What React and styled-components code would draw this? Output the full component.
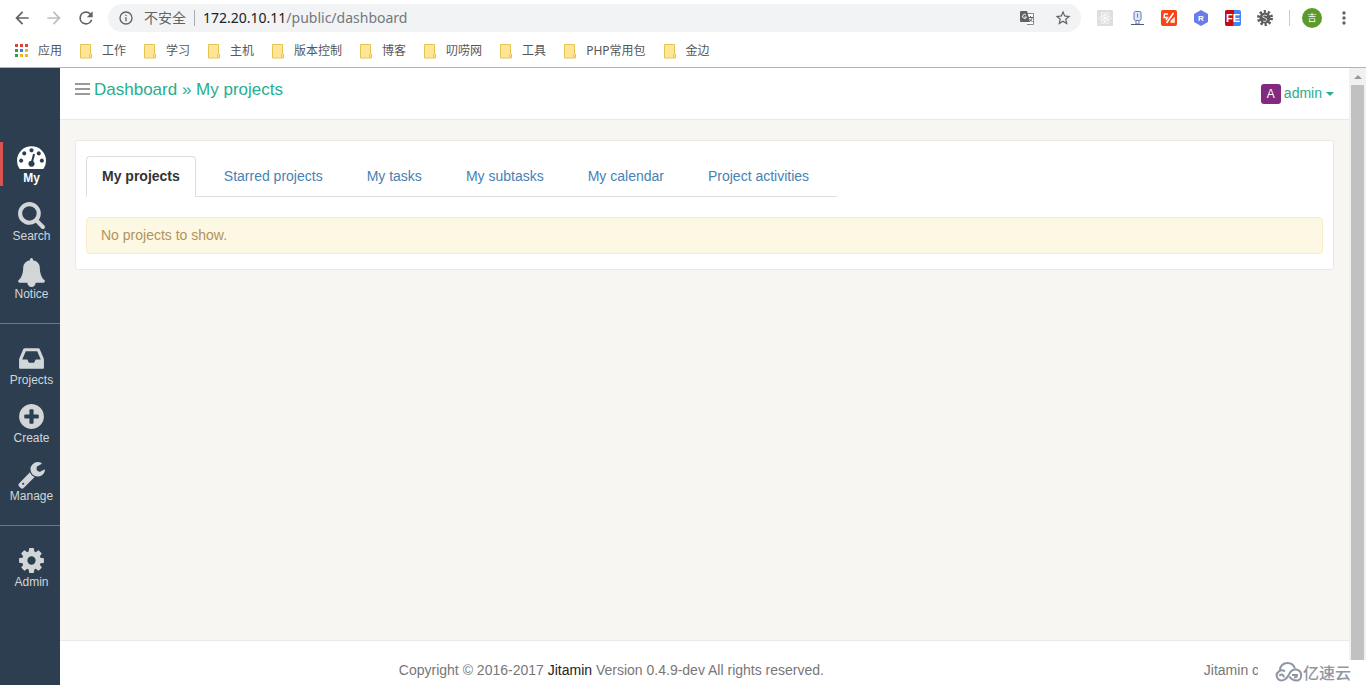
import React from 'react';
import styled, { createGlobalStyle, css } from 'styled-components';

const ui = '"Noto Sans", "Noto Sans CJK SC", sans-serif';
const body = '"Liberation Sans", Arial, sans-serif';

const GlobalStyle = createGlobalStyle`
  * { box-sizing: border-box; }
  html, body, #root { height: 100%; }
  body { margin: 0; background: #fff; font: 14px/20px ${body}; color: #777; overflow: hidden; }
  button, input { font: inherit; color: inherit; }
  a { text-decoration: none; color: inherit; }
  ul { margin: 0; padding: 0; list-style: none; }
`;

const Window = styled.div`
  display: flex;
  flex-direction: column;
  height: 100vh;
`;

/* Browser chrome */
const Chrome = styled.header`
  flex: none;
  background: #fff;
  border-bottom: 1px solid #b1b3b6;
  font-family: ${ui};
`;

const Toolbar = styled.div`
  display: flex;
  align-items: center;
  height: 36px;
  padding: 0 6px;
`;

const IconButton = styled.button`
  display: flex;
  align-items: center;
  justify-content: center;
  flex: none;
  width: 32px;
  height: 28px;
  padding: 0;
  border: 0;
  background: none;
`;

const AddressBar = styled.form`
  display: flex;
  flex: 1;
  align-items: center;
  height: 28px;
  margin: 0 8px 0 6px;
  padding: 0 2px 0 10px;
  border-radius: 14px;
  background: #f1f3f4;
`;

const Security = styled.span`
  display: flex;
  align-items: center;
  gap: 10px;
  padding-right: 8px;
  border-right: 1px solid #a9acb0;
  font-size: 14px;
  line-height: 14px;
  color: #5f6368;
`;

const UrlField = styled.div`
  display: grid;
  flex: 1;
  margin-left: 8px;
  font-size: 14px;
  line-height: 20px;
  color: #74787c;
`;

const UrlInput = styled.input`
  grid-area: 1 / 1;
  width: 100%;
  padding: 0;
  border: 0;
  outline: 0;
  background: none;
  color: transparent;
`;

const UrlText = styled.span`
  grid-area: 1 / 1;
  pointer-events: none;
  b { font-weight: 400; color: #202124; }
`;

const BarActions = styled.div`
  display: flex;
  gap: 4px;
`;

const ToolSeparator = styled.span`
  width: 1px;
  height: 16px;
  margin: 0 6px 0 8px;
  background: #c8cacd;
`;

const Avatar = styled.span`
  display: flex;
  align-items: center;
  justify-content: center;
  width: 20px;
  height: 20px;
  border-radius: 50%;
  background: #5b9a2b;
  color: #fff;
  font-size: 9px;
  line-height: 10px;
`;

const Bookmarks = styled.nav`
  display: flex;
  align-items: center;
  gap: 18px;
  height: 31px;
  padding: 0 14px 1px;
  font-size: 12px;
  line-height: 18px;
  color: #54575b;
`;

const Bookmark = styled.a`
  display: flex;
  align-items: center;
  gap: 9px;
`;

/* Application */
const Workspace = styled.div`
  display: flex;
  flex: 1;
  min-height: 0;
`;

const Sidebar = styled.nav`
  flex: none;
  width: 60px;
  padding-top: 74px;
  background: #2c3e50;
`;

const NavGroup = styled.ul`
  display: flex;
  flex-direction: column;
  gap: 14px;
  & + & {
    margin-top: 21px;
    padding-top: 20px;
    border-top: 1px solid #6b7885;
  }
`;

const NavLink = styled.a`
  display: flex;
  flex-direction: column;
  align-items: center;
  height: 44px;
  border-left: 3px solid transparent;
  font-size: 12px;
  line-height: 14px;
  color: #d3d6d9;
  ${(p) => p.$active && css`
    border-left-color: #d9534f;
    font-weight: 700;
    color: #fff;
  `}
`;

const Main = styled.main`
  display: flex;
  flex: 1;
  flex-direction: column;
  min-width: 0;
  background: #f7f6f2;
`;

const TopBar = styled.header`
  display: flex;
  justify-content: space-between;
  height: 52px;
  padding: 12px 15px 0;
  border-bottom: 1px solid #e9e9e6;
  background: #fff;
`;

const Breadcrumb = styled.h1`
  display: flex;
  align-items: center;
  gap: 4px;
  height: 20px;
  margin: 0;
  font-size: 17px;
  font-weight: 400;
  line-height: 20px;
  color: #26ae8f;
`;

const MenuButton = styled.button`
  display: flex;
  padding: 0;
  border: 0;
  background: none;
`;

const UserMenu = styled.button`
  display: flex;
  align-items: flex-start;
  gap: 3px;
  height: 20px;
  margin-top: 4px;
  padding: 0;
  border: 0;
  background: none;
  line-height: 18px;
  color: #26ae8f;
`;

const Caret = styled.span`
  align-self: center;
  border: 4px solid transparent;
  border-top-color: currentColor;
  border-bottom: 0;
  margin-left: 1px;
`;

const Initial = styled.span`
  width: 20px;
  height: 20px;
  border-radius: 3px;
  background: #822a80;
  color: #fff;
  font-size: 12px;
  line-height: 20px;
  text-align: center;
`;

const Panel = styled.section`
  margin: 20px 15px 0;
  padding: 15px 10px;
  border: 1px solid #eae9e6;
  border-radius: 3px;
  background: #fff;
`;

const Tabs = styled.ul`
  display: flex;
  width: fit-content;
  border-bottom: 1px solid #ddd;
`;

const Tab = styled.a`
  display: block;
  height: 40px;
  margin-right: 12px;
  padding: 10px 16px;
  border-radius: 4px 4px 0 0;
  color: #4682b4;
  ${(p) => p.$active && css`
    height: 41px;
    margin-bottom: -1px;
    padding: 9px 15px;
    border: 1px solid #ddd;
    border-bottom-color: #fff;
    background: #fff;
    font-weight: 700;
    color: #333;
  `}
`;

const Alert = styled.p`
  margin: 20px 0 0;
  padding: 7px 14px 8px;
  border: 1px solid #faebcc;
  border-radius: 4px;
  background: #fcf8e3;
  color: #b3925a;
`;

const Footer = styled.footer`
  display: grid;
  grid-template-columns: minmax(0, 16fr) minmax(0, 3fr);
  height: 45px;
  margin-top: auto;
  padding: 19px 0 0 15px;
  border-top: 1px solid #e9e9e6;
  background: #fff;
`;

const Copyright = styled.span`
  text-align: center;
  a { color: #222; }
`;

const FooterNote = styled.span`
  padding-left: 56px;
  white-space: nowrap;
`;

const Scrollbar = styled.div`
  display: flex;
  flex: none;
  flex-direction: column;
  align-items: center;
  width: 17px;
  padding: 0 2px 25px 2px;
  background: #f1f1f1;
`;

const ScrollArrow = styled.span`
  display: flex;
  align-items: center;
  height: 17px;
`;

const ScrollThumb = styled.span`
  flex: 1;
  width: 100%;
  background: #c1c1c1;
`;

const Watermark = styled.div`
  position: fixed;
  right: 0;
  bottom: 0;
  display: flex;
  align-items: center;
  width: 108px;
  height: 25px;
  padding: 0 0 2px 17px;
  background: #fff;
  color: #8f95a1;
  font: 500 16px/22px "Noto Sans CJK SC", sans-serif;
`;

const glyphs = {
  dashboard: 'M384 1152q0-53-37.5-90.5t-90.5-37.5-90.5 37.5-37.5 90.5 37.5 90.5 90.5 37.5 90.5-37.5 37.5-90.5zm192-448q0-53-37.5-90.5t-90.5-37.5-90.5 37.5-37.5 90.5 37.5 90.5 90.5 37.5 90.5-37.5 37.5-90.5zm428 481l101-382q6-26-7.5-48.5t-38.5-29.5-48 6.5-30 39.5l-101 382q-60 5-107 43.5t-63 98.5q-20 77 20 146t117 89 146-20 89-117q16-60-6-117t-72-91zm660-33q0-53-37.5-90.5t-90.5-37.5-90.5 37.5-37.5 90.5 37.5 90.5 90.5 37.5 90.5-37.5 37.5-90.5zm-640-640q0-53-37.5-90.5t-90.5-37.5-90.5 37.5-37.5 90.5 37.5 90.5 90.5 37.5 90.5-37.5 37.5-90.5zm448 192q0-53-37.5-90.5t-90.5-37.5-90.5 37.5-37.5 90.5 37.5 90.5 90.5 37.5 90.5-37.5 37.5-90.5zm320 448q0 261-141 483-19 29-54 29h-1402q-35 0-54-29-141-221-141-483 0-182 71-348t191-286 286-191 348-71 348 71 286 191 191 286 71 348z',
  search: 'M1216 832q0-185-131.5-316.5t-316.5-131.5-316.5 131.5-131.5 316.5 131.5 316.5 316.5 131.5 316.5-131.5 131.5-316.5zm512 832q0 52-38 90t-90 38q-54 0-90-38l-343-342q-179 124-399 124-143 0-273.5-55.5t-225-150-150-225-55.5-273.5 55.5-273.5 150-225 225-150 273.5-55.5 273.5 55.5 225 150 150 225 55.5 273.5q0 220-124 399l343 343q37 37 37 90z',
  bell: 'M1728 1408q0 52-38 90t-90 38h-448q0 106-75 181t-181 75-181-75-75-181h-448q-52 0-90-38t-38-90q50-42 91-88t85-119.500 74.500-158.500 50-206 19.500-260q0-152 117-282.500t307-158.500q-8-19-8-39 0-40 28-68t68-28 68 28 28 68q0 20-8 39 190 28 307 158.500t117 282.500q0 139 19.500 260t50 206 74.500 158.500 85 119.500 91 88z',
  inbox: 'M1151 960h316q-1-3-2.5-8t-2.5-8l-212-496h-708l-212 496q-1 2-2.5 8t-2.5 8h316l95 192h320zm513 30v482q0 26-19 45t-45 19h-1408q-26 0-45-19t-19-45v-482q0-62 25-123l238-552q10-25 36.5-42t52.5-17h832q26 0 52.5 17t36.5 42l238 552q25 61 25 123z',
  plus: 'M1344 960v-128q0-26-19-45t-45-19h-256v-256q0-26-19-45t-45-19h-128q-26 0-45 19t-19 45v256h-256q-26 0-45 19t-19 45v128q0 26 19 45t45 19h256v256q0 26 19 45t45 19h128q26 0 45-19t19-45v-256h256q26 0 45-19t19-45zm320-64q0 209-103 385.5t-279.5 279.5-385.5 103-385.5-103-279.5-279.5-103-385.5 103-385.5 279.5-279.5 385.5-103 385.5 103 279.5 279.5 103 385.5z',
  wrench: 'M448 1472q0-26-19-45t-45-19-45 19-19 45 19 45 45 19 45-19 19-45zm644-420l-682 682q-37 37-90 37-52 0-91-37l-106-108q-38-36-38-90 0-53 38-91l681-681q39 98 114.5 173.5t173.5 114.5zm634-435q0 39-23 106-47 134-164.5 217.5t-258.5 83.5q-185 0-316.5-131.5t-131.5-316.5 131.5-316.5 316.5-131.5q58 0 121.5 16.5t107.5 46.5q16 11 16 28t-16 28l-293 169v224l193 107q5-3 79-48.5t135.5-81 70.5-35.5q15 0 23.5 10t8.5 25z',
  cog: 'M1152 896q0-106-75-181t-181-75-181 75-75 181 75 181 181 75 181-75 75-181zm512-109v222q0 12-8 23t-20 13l-185 28q-19 54-39 91 35 50 107 138 10 12 10 25t-9 23q-27 37-99 108t-94 71q-12 0-26-9l-138-108q-44 23-91 38-16 136-29 186-7 28-36 28h-222q-14 0-24.5-8.5t-11.5-21.5l-28-184q-49-16-90-37l-141 107q-10 9-25 9-14 0-25-11-126-114-165-168-7-10-7-23 0-12 8-23 15-21 51-66.5t54-70.5q-27-50-41-99l-183-27q-13-2-21-12.5t-8-23.5v-222q0-12 8-23t19-13l186-28q14-46 39-92-40-57-107-138-10-12-10-24 0-10 9-23 26-36 98.5-107.5t94.5-71.5q13 0 26 10l138 107q44-23 91-38 16-136 29-186 7-28 36-28h222q14 0 24.5 8.5t11.5 21.5l28 184q49 16 90 37l142-107q9-9 24-9 13 0 25 10 129 119 165 170 7 8 7 22 0 12-8 23-15 21-51 66.5t-54 70.5q26 50 41 98l183 28q13 2 21 12.5t8 23.5z',
};

const Glyph = ({ name }) => (
  <svg width="29" height="29" viewBox="0 0 1792 1792" fill="currentColor" aria-hidden="true">
    <path d={glyphs[name]} />
  </svg>
);

const navGroups = [
  [['dashboard', 'My'], ['search', 'Search'], ['bell', 'Notice']],
  [['inbox', 'Projects'], ['plus', 'Create'], ['wrench', 'Manage']],
  [['cog', 'Admin']],
];

const bookmarks = ['工作', '学习', '主机', '版本控制', '博客', '叨唠网', '工具', 'PHP常用包', '金边'];
const tabs = ['My projects', 'Starred projects', 'My tasks', 'My subtasks', 'My calendar', 'Project activities'];

const MaterialIcon = ({ d, color = '#5f6368', size = 20 }) => (
  <svg width={size} height={size} viewBox="0 0 24 24" fill={color} aria-hidden="true"><path d={d} /></svg>
);

const AppsIcon = () => {
  const colors = ['#d94436', '#d94436', '#d94436', '#2f9e52', '#3b7ded', '#f2b51d', '#2f9e52', '#f2b51d', '#f2b51d'];
  return (
    <svg width="15" height="14" viewBox="0 0 15 14" aria-hidden="true">
      {colors.map((c, i) => <rect key={i} x={(i % 3) * 5 + 1} y={Math.floor(i / 3) * 5} width="3" height="3" fill={c} />)}
    </svg>
  );
};

const FolderIcon = () => (
  <svg width="13" height="15" viewBox="0 0 13 15" aria-hidden="true">
    <path d="M.5.500h10v9.500h1v4H.5z" fill="#ffe596" stroke="#e6c453" />
    <path d="M9.500 13.500v-3" fill="none" stroke="#e6c453" />
  </svg>
);

const extensions = [
  ['React tools', (
    <svg width="16" height="16" viewBox="0 0 16 16"><rect width="16" height="16" rx="1" fill="#dedede" /><g fill="none" stroke="#f6f6f6"><ellipse cx="8" cy="8" rx="6" ry="2.300" /><ellipse cx="8" cy="8" rx="6" ry="2.300" transform="rotate(60 8 8)" /><ellipse cx="8" cy="8" rx="6" ry="2.300" transform="rotate(120 8 8)" /></g><circle cx="8" cy="8" r="1.300" fill="#fff" /></svg>
  )],
  ['Recorder', (
    <svg width="16" height="16" viewBox="0 0 16 16"><rect x="5" y="1.500" width="7" height="9" rx="1.500" fill="#dfe8fb" stroke="#6577b5" /><path d="M8.500 3.500v4M7 11v3h3v-3" stroke="#6577b5" fill="none" /><path d="M2 14.500h13" stroke="#555c70" /></svg>
  )],
  ['Snippets', (
    <svg width="16" height="16" viewBox="0 0 16 16"><rect width="16" height="16" rx="2" fill="#fa4414" /><path d="M7 4H3.500L3 7.500h3.500L5 10M12.500 3L5.500 13M9.500 12H13V8.500l-3 3" fill="none" stroke="#fff" strokeWidth="1.500" /></svg>
  )],
  ['R', (
    <svg width="16" height="16" viewBox="0 0 16 16"><path d="M8 0l7 4v8l-7 4-7-4V4z" fill="#6c7bea" /><text x="8" y="11" textAnchor="middle" fontFamily="Liberation Sans" fontWeight="700" fontSize="8" fill="#fff">R</text></svg>
  )],
  ['FE helper', (
    <svg width="16" height="16" viewBox="0 0 16 16"><rect width="16" height="16" rx="2" fill="#4285f4" /><path d="M2 0h7v9l-1 7H2a2 2 0 0 1-2-2V2a2 2 0 0 1 2-2z" fill="#c80d10" /><text x="8" y="12" textAnchor="middle" fontFamily="Liberation Sans" fontWeight="700" fontSize="11" fill="#fff">FE</text></svg>
  )],
  ['Gear', (
    <svg width="16" height="16" viewBox="0 0 16 16"><circle cx="8" cy="8" r="6.500" fill="none" stroke="#5c5c5c" strokeWidth="3" strokeDasharray="2.200 1.880" /><circle cx="8" cy="8" r="5.500" fill="#5c5c5c" /><path d="M10 5.500L7 5 5.500 7l4.500 2-1.500 2.500L6 11" fill="none" stroke="#d8d8d8" /></svg>
  )],
];

export default function App() {
  return (
    <Window>
      <GlobalStyle />
      <Chrome>
        <Toolbar>
          <IconButton aria-label="Back"><MaterialIcon d="M20 11H7.830l5.590-5.590L12 4l-8 8 8 8 1.410-1.410L7.830 13H20v-2z" /></IconButton>
          <IconButton aria-label="Forward"><MaterialIcon color="#bcbec1" d="M12 4l-1.410 1.410L16.170 11H4v2h12.170l-5.580 5.590L12 20l8-8z" /></IconButton>
          <IconButton aria-label="Reload"><MaterialIcon d="M17.650 6.350A7.960 7.960 0 0 0 12 4a8 8 0 1 0 7.730 10h-2.080A6 6 0 1 1 12 6c1.660 0 3.140.69 4.220 1.780L13 11h7V4l-2.350 2.350z" /></IconButton>
          <AddressBar onSubmit={(e) => e.preventDefault()}>
            <Security>
              <MaterialIcon size={16} d="M11 17h2v-6h-2v6zm1-15a10 10 0 1 0 0 20 10 10 0 0 0 0-20zm0 18a8 8 0 1 1 0-16 8 8 0 0 1 0 16zM11 9h2V7h-2v2z" />
              不安全
            </Security>
            <UrlField>
              <UrlInput aria-label="Address" />
              <UrlText><b>172.20.10.11</b>/public/dashboard</UrlText>
            </UrlField>
            <BarActions>
              <IconButton type="button" aria-label="Translate">
                <svg width="16" height="16" viewBox="0 0 16 16"><path d="M7 3.500h7.500v11H8" fill="#fff" stroke="#85888c" /><path d="M2 1h6l3 11H2a1 1 0 0 1-1-1V2a1 1 0 0 1 1-1z" fill="#5f6368" /><path d="M7 5a2 2 0 1 0 .5 2H5.500" fill="none" stroke="#fff" /><path d="M9 7.500h5M11.500 6v1.500M13 8c0 2-2 3-3 4M10.500 9l3 3" fill="none" stroke="#5f6368" /></svg>
              </IconButton>
              <IconButton type="button" aria-label="Bookmark">
                <MaterialIcon size={18} d="M22 9.240l-7.190-.62L12 2 9.190 8.630 2 9.240l5.460 4.730L5.820 21 12 17.270 18.180 21l-1.630-7.030L22 9.240zM12 15.400l-3.760 2.270 1-4.280-3.320-2.880 4.380-.38L12 6.100l1.710 4.040 4.380.38-3.320 2.880 1 4.280L12 15.400z" />
              </IconButton>
            </BarActions>
          </AddressBar>
          {extensions.map(([name, icon]) => <IconButton key={name} aria-label={name}>{icon}</IconButton>)}
          <ToolSeparator />
          <IconButton aria-label="Profile"><Avatar>吉</Avatar></IconButton>
          <IconButton aria-label="Browser menu"><MaterialIcon d="M12 8a2 2 0 1 0 0-4 2 2 0 0 0 0 4zm0 2a2 2 0 1 0 0 4 2 2 0 0 0 0-4zm0 6a2 2 0 1 0 0 4 2 2 0 0 0 0-4z" /></IconButton>
        </Toolbar>
        <Bookmarks aria-label="Bookmarks">
          <Bookmark href="#apps"><AppsIcon />应用</Bookmark>
          {bookmarks.map((b) => <Bookmark key={b} href="#folder"><FolderIcon />{b}</Bookmark>)}
        </Bookmarks>
      </Chrome>
      <Workspace>
        <Sidebar aria-label="Main">
          {navGroups.map((group) => (
            <NavGroup key={group[0][1]}>
              {group.map(([icon, label]) => (
                <li key={label}><NavLink href={`#${label}`} $active={label === 'My'}><Glyph name={icon} />{label}</NavLink></li>
              ))}
            </NavGroup>
          ))}
        </Sidebar>
        <Main>
          <TopBar>
            <Breadcrumb>
              <MenuButton aria-label="Toggle sidebar">
                <svg width="15" height="14" viewBox="0 0 15 14"><path d="M0 1h15M0 6h15M0 11h15" stroke="#999" strokeWidth="2" /></svg>
              </MenuButton>
              <a href="#dashboard">Dashboard » My projects</a>
            </Breadcrumb>
            <UserMenu>
              <Initial>A</Initial>
              admin
              <Caret />
            </UserMenu>
          </TopBar>
          <Panel>
            <Tabs>
              {tabs.map((t, i) => <li key={t}><Tab href="#tab" $active={i === 0}>{t}</Tab></li>)}
            </Tabs>
            <Alert>No projects to show.</Alert>
          </Panel>
          <Footer>
            <Copyright>Copyright © 2016-2017 <a href="#jitamin">Jitamin</a> Version 0.4.9-dev All rights reserved.</Copyright>
            <FooterNote>Jitamin c</FooterNote>
          </Footer>
        </Main>
        <Scrollbar>
          <ScrollArrow><svg width="8" height="4" viewBox="0 0 8 4"><path d="M4 0l4 4H0z" fill="#999" /></svg></ScrollArrow>
          <ScrollThumb />
        </Scrollbar>
      </Workspace>
      <Watermark>
        <svg width="28" height="20" viewBox="0 0 28 20" fill="none" stroke="currentColor" strokeWidth="2" aria-hidden="true">
          <path d="M5 8C5 4 8 1 12.500 1S19 3.500 20 6.500" />
          <path d="M10 9.500C8 8 6 8 4 9.300a5 5 0 0 0 2.500 9.200c4.500 0 6-3.500 8-7 1.500-3 4-4.500 7-4 6.500 1.500 6 11 0 11-3.500 0-5.500-1.500-7-4" />
          <path d="M4.500 14c1-2.500 5-1.500 4 1.500M17 13h5c0 2-1 2.500-3 2.500" />
        </svg>
        亿速云
      </Watermark>
    </Window>
  );
}
